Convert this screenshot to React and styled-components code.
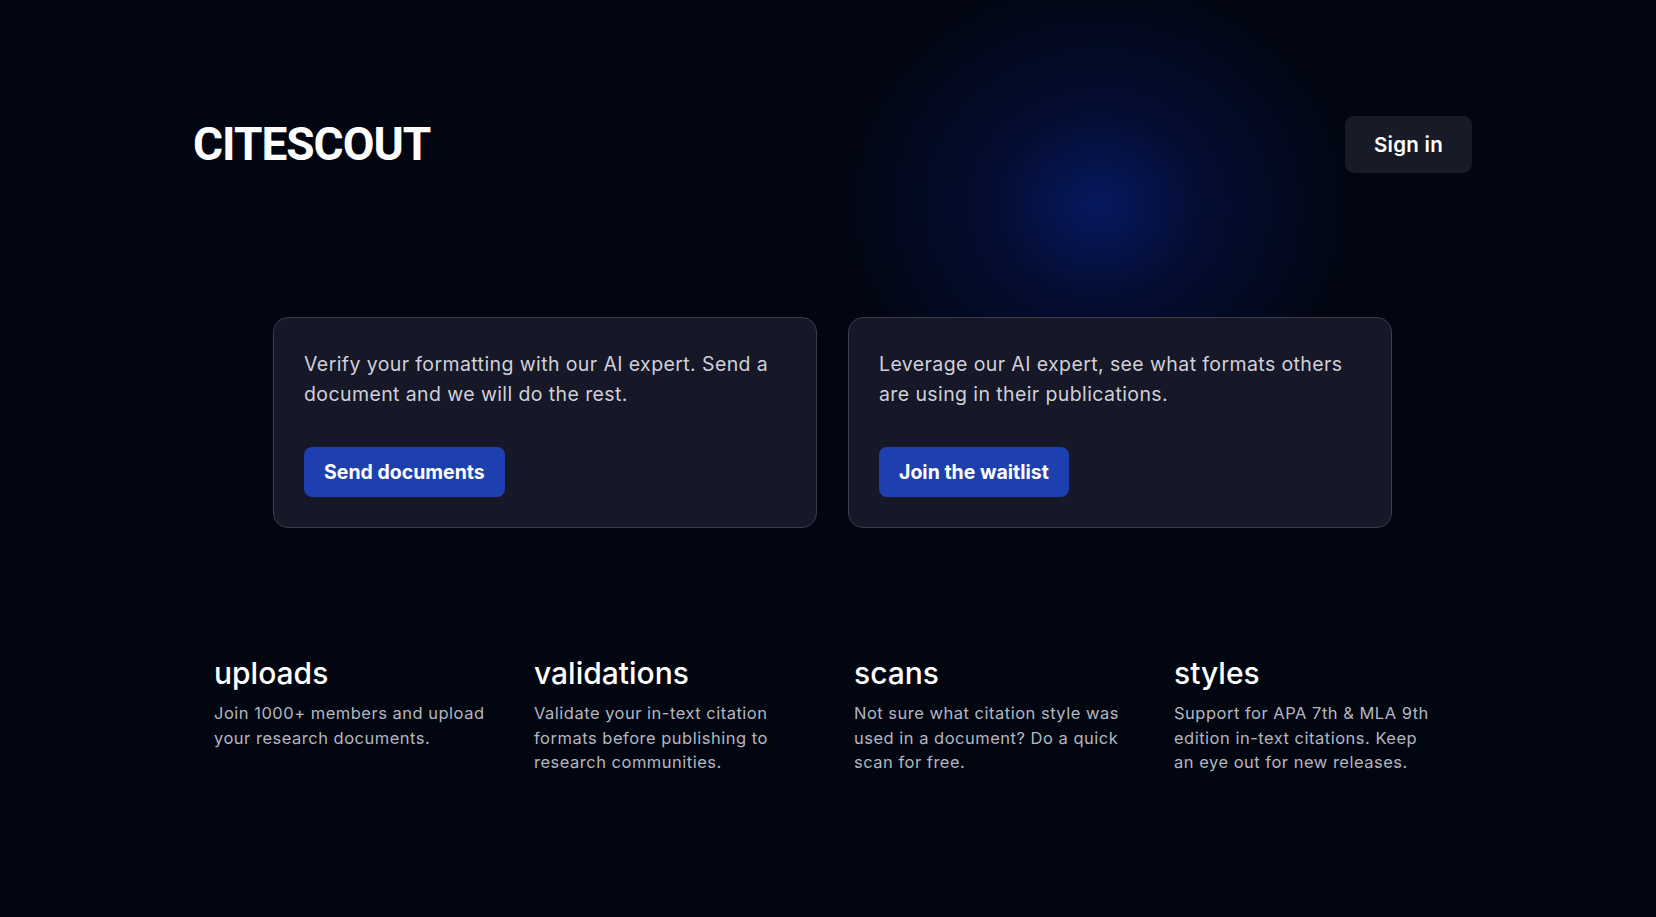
import styled, { createGlobalStyle } from 'styled-components'

const GlobalStyle = createGlobalStyle`
    html, body {
        margin: 0;
        padding: 0;
        background: #020611;
    }
    * {
        box-sizing: border-box;
    }
`

const Page = styled.div`
    min-height: 100vh;
    background:
        radial-gradient(ellipse 260px 235px at 1098px 205px, rgba(8, 28, 115, 0.8) 0%, rgba(6, 22, 90, 0.45) 40%, rgba(2, 6, 17, 0) 100%),
        #020611;
    font-family: Inter, "Noto Sans", sans-serif;
    color: #ffffff;
    overflow: hidden;
`

const Container = styled.div`
    width: 1290px;
    margin: 0 auto;
`

const Header = styled.header`
    display: flex;
    align-items: center;
    justify-content: space-between;
    padding: 116px 1px 0 10px;
`

const Logo = styled.div`
    font-family: Roboto, "Liberation Sans", sans-serif;
    font-weight: 700;
    font-size: 46px;
    letter-spacing: -1px;
    line-height: 57px;
`

const SignIn = styled.button`
    width: 127px;
    height: 57px;
    border: none;
    border-radius: 9px;
    background: #161b27;
    color: #ffffff;
    font-family: Inter, "Noto Sans", sans-serif;
    font-size: 20.5px;
    font-weight: 600;
    letter-spacing: 0.3px;
    cursor: pointer;
`

const Cards = styled.div`
    display: flex;
    justify-content: center;
    gap: 31px;
    margin-top: 144px;
    padding-left: 9px;
`

const Card = styled.div`
    width: 544px;
    height: 211px;
    padding: 31px 30px 30px 30px;
    display: flex;
    flex-direction: column;
    justify-content: space-between;
    background: #161727;
    border: 1px solid #3b3d4c;
    border-radius: 15px;
`

const CardText = styled.p`
    margin: 0;
    font-size: 19.5px;
    line-height: 30px;
    letter-spacing: 0.4px;
    color: #cfd0d8;
    font-weight: 400;
`

const PrimaryButton = styled.button`
    align-self: flex-start;
    height: 50px;
    padding: 0 20px;
    border: none;
    border-radius: 8px;
    background: #1e3fb0;
    color: #ffffff;
    font-family: Inter, "Noto Sans", sans-serif;
    font-size: 19.5px;
    font-weight: 700;
    cursor: pointer;
`

const Features = styled.div`
    display: grid;
    grid-template-columns: repeat(4, 280px);
    column-gap: 40px;
    margin-top: 127px;
    padding-left: 31px;
`

const Feature = styled.div`
    display: flex;
    flex-direction: column;
    gap: 10px;
`

const FeatureTitle = styled.h3`
    margin: 0;
    font-size: 30px;
    line-height: 36px;
    font-weight: 500;
    color: #ffffff;
`

const FeatureText = styled.p`
    margin: 0;
    font-size: 16.5px;
    line-height: 24.5px;
    letter-spacing: 0.5px;
    color: #b4b6c0;
`

const FeatureLine = styled.span`
    display: block;
    white-space: nowrap;
`

const features = [
    { title: 'uploads', lines: ['Join 1000+ members and upload', 'your research documents.'] },
    { title: 'validations', lines: ['Validate your in-text citation', 'formats before publishing to', 'research communities.'] },
    { title: 'scans', lines: ['Not sure what citation style was', 'used in a document? Do a quick', 'scan for free.'] },
    { title: 'styles', lines: ['Support for APA 7th & MLA 9th', 'edition in-text citations. Keep', 'an eye out for new releases.'] },
]

const App = () => {
    return (
        <Page>
            <GlobalStyle />
            <Container>
                <Header>
                    <Logo>CITESCOUT</Logo>
                    <SignIn>Sign in</SignIn>
                </Header>

                <Cards>
                    <Card>
                        <CardText>Verify your formatting with our AI expert. Send a document and we will do the rest.</CardText>
                        <PrimaryButton>Send documents</PrimaryButton>
                    </Card>
                    <Card>
                        <CardText>Leverage our AI expert, see what formats others are using in their publications.</CardText>
                        <PrimaryButton>Join the waitlist</PrimaryButton>
                    </Card>
                </Cards>

                <Features>
                    {features.map((f) => (
                        <Feature key={f.title}>
                            <FeatureTitle>{f.title}</FeatureTitle>
                            <FeatureText>
                                {f.lines.map((line) => (
                                    <FeatureLine key={line}>{line}</FeatureLine>
                                ))}
                            </FeatureText>
                        </Feature>
                    ))}
                </Features>
            </Container>
        </Page>
    )
}

export default App
